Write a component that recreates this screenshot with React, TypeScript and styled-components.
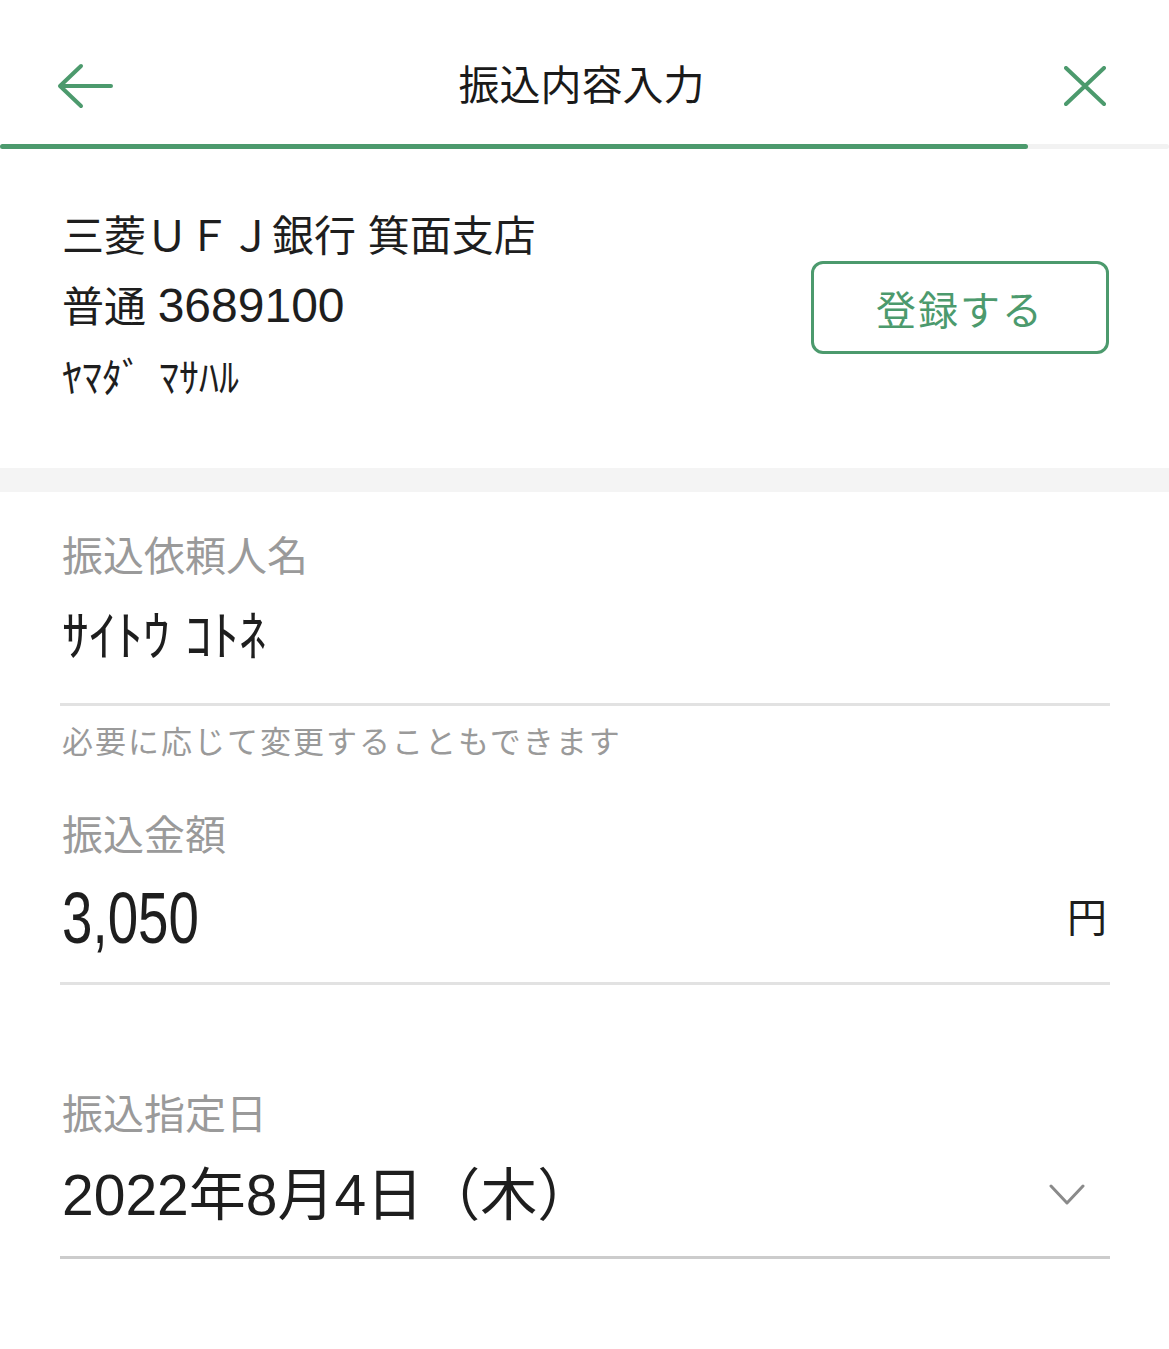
import React from "react";
import styled, { createGlobalStyle } from "styled-components";

const GREEN = "#4c9a6d";

const GlobalStyle = createGlobalStyle`
  html, body {
    margin: 0;
    padding: 0;
    background: #ffffff;
    font-family: "Liberation Sans", "Noto Sans CJK JP", sans-serif;
    color: #222222;
  }
  * { box-sizing: border-box; }
`;

const Page = styled.div`
  width: 1169px;
  min-height: 1349px;
  background: #ffffff;
`;

const Header = styled.header`
  height: 144px;
  padding: 28px 63px 0 57px;
  display: grid;
  grid-template-columns: 1fr auto 1fr;
  align-items: center;
`;

const IconButton = styled.button<{ $align: "start" | "end" }>`
  justify-self: ${(p) => p.$align};
  display: flex;
  padding: 0;
  border: none;
  background: none;
  cursor: pointer;
`;

const Title = styled.h1`
  margin: 0;
  font-size: 41px;
  font-weight: 400;
  line-height: 1;
  color: #1a1a1a;
`;

const Track = styled.div`
  height: 5px;
  background: #f2f2f2;
  border-radius: 3px;
`;

const Fill = styled.div`
  height: 100%;
  background: ${GREEN};
  border-radius: 3px;
`;

const Payee = styled.section`
  padding: 52px 60px 54px 62px;
  display: flex;
  align-items: center;
  justify-content: space-between;
`;

const PayeeInfo = styled.div`
  display: flex;
  flex-direction: column;
`;

const InfoLine = styled.div<{ $size: number }>`
  height: 71px;
  font-size: ${(p) => p.$size}px;
  line-height: 71px;
  white-space: pre;
  color: #1e1e1e;
`;

const Digits = styled.span`
  font-size: 48px;
  line-height: 1;
`;

const Kana = styled.span`
  word-spacing: 6px;
`;

const OutlineButton = styled.button`
  width: 298px;
  height: 93px;
  border: 3px solid ${GREEN};
  border-radius: 12px;
  background: #ffffff;
  color: ${GREEN};
  font-family: inherit;
  font-size: 40px;
  letter-spacing: 2px;
  cursor: pointer;
`;

const Divider = styled.div`
  height: 24px;
  background: #f4f4f4;
`;

const Form = styled.section`
  padding: 35px 59px 80px 62px;
  display: flex;
  flex-direction: column;
`;

const Label = styled.div<{ $gap?: number }>`
  margin-top: ${(p) => p.$gap ?? 0}px;
  height: 60px;
  font-size: 41px;
  line-height: 60px;
  color: #9a9a9a;
`;

const Field = styled.div<{ $top: number; $bottom: number; $line: string }>`
  display: flex;
  align-items: center;
  justify-content: space-between;
  padding: ${(p) => p.$top}px 0 ${(p) => p.$bottom}px 2px;
  margin-left: -2px;
  border-bottom: 3px solid ${(p) => p.$line};
`;

const Value = styled.div<{ $size: number }>`
  height: 80px;
  font-size: ${(p) => p.$size}px;
  line-height: 80px;
  white-space: pre;
  color: #1e1e1e;
`;

const Amount = styled.span`
  display: inline-block;
  height: 80px;
  font-size: 72px;
  line-height: 80px;
  transform: scaleX(0.76);
  transform-origin: left center;
  color: #1e1e1e;
`;

const Unit = styled.span`
  font-size: 40px;
  line-height: 1;
  margin-right: 3px;
  color: #1e1e1e;
`;

const Hint = styled.div`
  margin-top: 15px;
  height: 44px;
  font-size: 31px;
  line-height: 44px;
  letter-spacing: 2px;
  color: #9a9a9a;
`;

const Chevron = styled.svg`
  margin-right: 25px;
`;

export default function App() {
  const progress = 1028;

  return (
    <Page>
      <GlobalStyle />
      <Header>
        <IconButton $align="start" aria-label="戻る">
          <svg width="56" height="48" viewBox="0 0 56 48" fill="none">
            <path
              d="M54 24H4M24 4L3 24L24 44"
              stroke={GREEN}
              strokeWidth="4"
              strokeLinecap="round"
              strokeLinejoin="round"
            />
          </svg>
        </IconButton>
        <Title>振込内容入力</Title>
        <IconButton $align="end" aria-label="閉じる">
          <svg width="42" height="40" viewBox="0 0 42 40" fill="none">
            <path
              d="M2 2L40 38M40 2L2 38"
              stroke={GREEN}
              strokeWidth="4"
              strokeLinecap="round"
            />
          </svg>
        </IconButton>
      </Header>
      <Track>
        <Fill style={{ width: progress }} />
      </Track>

      <Payee>
        <PayeeInfo>
          <InfoLine $size={42}>三菱ＵＦＪ銀行 箕面支店</InfoLine>
          <InfoLine $size={42}>
            普通 <Digits>3689100</Digits>
          </InfoLine>
          <InfoLine $size={40}>
            <Kana>ﾔﾏﾀﾞ ﾏｻﾊﾙ</Kana>
          </InfoLine>
        </PayeeInfo>
        <OutlineButton>登録する</OutlineButton>
      </Payee>

      <Divider />

      <Form>
        <Label>振込依頼人名</Label>
        <Field $top={10} $bottom={26} $line="#e2e2e2">
          <Value $size={54}>ｻｲﾄｳ ｺﾄﾈ</Value>
        </Field>
        <Hint>必要に応じて変更することもできます</Hint>

        <Label $gap={41}>振込金額</Label>
        <Field $top={12} $bottom={24} $line="#e2e2e2">
          <Amount>3,050</Amount>
          <Unit>円</Unit>
        </Field>

        <Label $gap={100}>振込指定日</Label>
        <Field $top={10} $bottom={21} $line="#cccccc">
          <Value $size={57}>2022年8月4日（木）</Value>
          <Chevron width="36" height="22" viewBox="0 0 36 22" fill="none">
            <path
              d="M2 2L18 19L34 2"
              stroke="#8a8a8a"
              strokeWidth="3"
              strokeLinecap="round"
              strokeLinejoin="round"
            />
          </Chevron>
        </Field>
      </Form>
    </Page>
  );
}
